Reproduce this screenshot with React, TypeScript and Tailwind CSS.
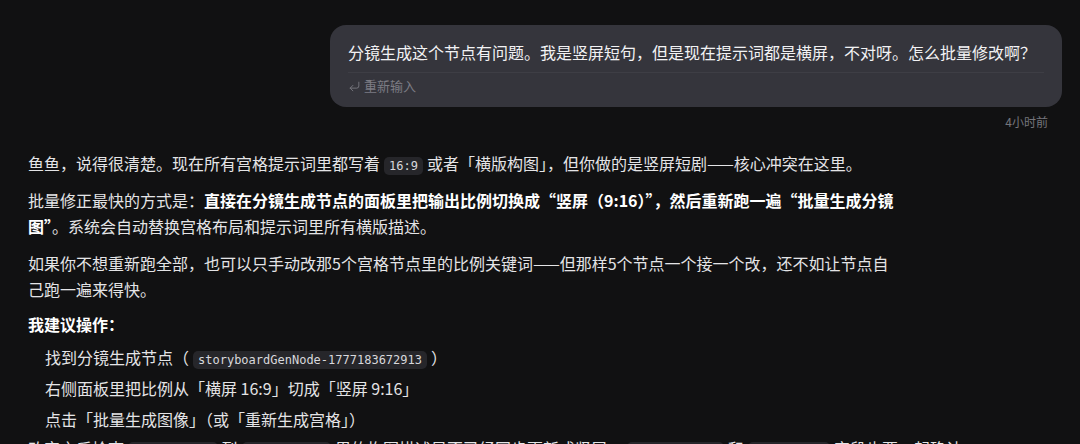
import { CornerDownLeft } from 'lucide-react'

const font = { fontFamily: '"Noto Sans CJK SC", "Noto Sans", sans-serif' }

function Code({ children }: { children: string }) {
  return (
    <code className="mx-1 rounded-[5px] bg-[#26262a] px-[5px] py-[2px] font-['DejaVu_Sans_Mono',monospace] text-[12px] leading-[16px] text-[#d8d8dc]">
      {children}
    </code>
  )
}

const steps = [
  <>
    找到分镜生成节点（<Code>storyboardGenNode-1777183672913</Code>）
  </>,
  <>右侧面板里把比例从「横屏 16:9」切成「竖屏 9:16」</>,
  <>点击「批量生成图像」（或「重新生成宫格」）</>,
]

export default function App() {
  return (
    <div className="h-[444px] w-[1080px] overflow-hidden bg-[#111112] text-[16px] text-[#e4e4e6]" style={font}>
      {/* user message */}
      <div className="flex flex-col items-end pr-[18px] pt-[25px]">
        <div className="w-[732px] rounded-[16px] bg-[#35353c] px-[18px] pb-[11px] pt-[14px]">
          <p className="leading-[26px] text-[#f2f2f4]">
            分镜生成这个节点有问题。我是竖屏短句，但是现在提示词都是横屏，不对呀。怎么批量修改啊？
          </p>
          <div className="mt-[7px] border-t border-[#3e3e45] pt-[3px]">
            <span className="flex items-center gap-[3px] text-[13px] leading-[20px] text-[#7c7c84]">
              <CornerDownLeft size={13} strokeWidth={1.6} />
              重新输入
            </span>
          </div>
        </div>
        <span className="mr-[14px] mt-[6px] text-[12px] leading-[18px] text-[#75757c]">4小时前</span>
      </div>

      {/* assistant reply */}
      <div className="w-[904px] pl-[28px] pt-[19px] leading-[26px]">
        <p className="h-[26px]">
          鱼鱼，说得很清楚。现在所有宫格提示词里都写着<Code>16:9</Code>或者「横版构图」，但你做的是竖屏短剧——核心冲突在这里。
        </p>
        <p className="mt-[11px]">
          批量修正最快的方式是：
          <strong className="font-bold text-white">
            直接在分镜生成节点的面板里把输出比例切换成“竖屏（9:16）”，然后重新跑一遍“批量生成分镜图”
          </strong>
          。系统会自动替换宫格布局和提示词里所有横版描述。
        </p>
        <p className="mt-[11px]">
          如果你不想重新跑全部，也可以只手动改那5个宫格节点里的比例关键词——但那样5个节点一个接一个改，还不如让节点自己跑一遍来得快。
        </p>
        <p className="mt-[9px] h-[26px] font-bold text-white">我建议操作：</p>
        <ol className="mt-[7px] flex flex-col pl-[17px]">
          {steps.map((s, i) => (
            <li key={i} className="h-[31px] leading-[26px]">
              {s}
            </li>
          ))}
        </ol>
        <p className="-mt-[2px] h-[26px] whitespace-nowrap">
          改完之后检查<Code>panel_01.md</Code>到<Code>panel_05.md</Code>里的构图描述是否已经同步更新成竖屏，<Code>aspect_ratio</Code>和<Code>resolution</Code>字段也要一起确认。
        </p>
      </div>
    </div>
  )
}
